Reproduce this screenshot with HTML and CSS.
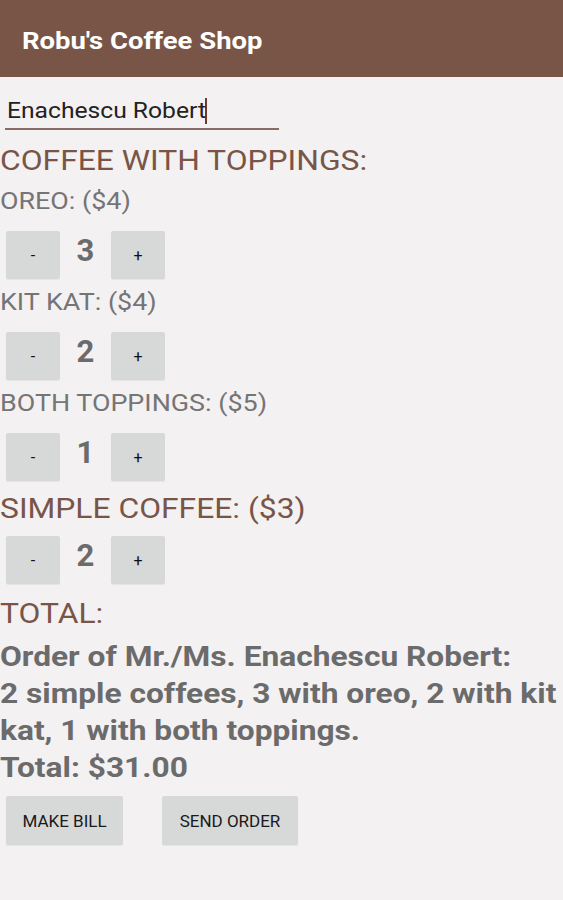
FILE: index.html
```html
<!DOCTYPE html>
<html>
<head>
<meta charset="utf-8">
<link rel="stylesheet" href="styles.css">
</head>
<body>
<header class="bar"><span class="bar-title sx">Robu's Coffee Shop</span></header>
<main class="content">
  <div class="name-field"><span class="name-text sx">Enachescu Robert</span><span class="caret"></span></div>
  <div class="heading"><span class="sx">COFFEE WITH TOPPINGS:</span></div>
  <div class="label"><span class="sx">OREO: ($4)</span></div>
  <div class="stepper"><span class="btn sq">-</span><span class="qty">3</span><span class="btn sq">+</span></div>
  <div class="label"><span class="sx">KIT KAT: ($4)</span></div>
  <div class="stepper"><span class="btn sq">-</span><span class="qty">2</span><span class="btn sq">+</span></div>
  <div class="label"><span class="sx">BOTH TOPPINGS: ($5)</span></div>
  <div class="stepper"><span class="btn sq">-</span><span class="qty">1</span><span class="btn sq">+</span></div>
  <div class="heading big"><span class="sx">SIMPLE COFFEE: ($3)</span></div>
  <div class="stepper after-big"><span class="btn sq">-</span><span class="qty">2</span><span class="btn sq">+</span></div>
  <div class="heading total"><span class="sx">TOTAL:</span></div>
  <div class="summary">Order of Mr./Ms. Enachescu Robert:<br>2 simple coffees, 3 with oreo, 2 with kit kat, 1 with both toppings.<br>Total: $31.00</div>
  <div class="actions"><span class="btn wide bill">MAKE BILL</span><span class="btn wide send">SEND ORDER</span></div>
</main>
</body>
</html>
```
FILE: styles.css
```css
html, body { margin: 0; padding: 0; }
body {
  background: #f3f1f2;
  font-family: Roboto, "Noto Sans", sans-serif;
  width: 563px;
  height: 900px;
  overflow: hidden;
}
.sx {
  display: inline-block;
  transform: scaleX(1.12);
  transform-origin: left center;
  white-space: nowrap;
}
.bar {
  height: 77px;
  background: #795548;
  display: flex;
  align-items: center;
  padding-left: 22px;
}
.bar-title {
  color: #fff;
  font-weight: 700;
  font-size: 24.5px;
  margin-top: 3px;
}
.content { display: flex; flex-direction: column; }
.name-field {
  margin: 16px 0 0 5px;
  width: 274px;
  height: 37px;
  border-bottom: 2px solid #8a6c66;
  display: flex;
  align-items: center;
  padding-left: 2px;
  box-sizing: border-box;
}
.name-text { font-size: 22px; color: #222; }
.caret { width: 2px; height: 26px; background: #6b3a2e; margin-left: 20px; }
.heading {
  color: #795548;
  font-size: 28.4px;
  line-height: 36px;
  margin: 13px 0 7px;
}
.heading.big { margin: 2px 0 0; }
.heading.total { margin: 4px 0 0; }
.label {
  color: #757575;
  font-size: 24px;
  line-height: 30px;
}
.stepper {
  display: flex;
  align-items: center;
  margin: 15px 0 8px 6px;
}
.stepper.after-big { margin-top: 9px; }
.btn {
  background: #d7d8d8;
  border-radius: 2px;
  color: #111;
  display: flex;
  align-items: center;
  justify-content: center;
  box-shadow: 0 1px 1px rgba(0,0,0,0.06);
}
.sq { width: 54px; height: 48px; font-size: 16px; }
.qty {
  width: 51px;
  text-align: center;
  font-size: 31px;
  font-weight: 700;
  color: #6b6b6b;
  margin-top: -9px;
}
.summary {
  color: #6b6b6b;
  font-weight: 700;
  font-size: 28.3px;
  line-height: 37px;
  margin-top: 6px;
  width: 502px;
  transform: scaleX(1.12);
  transform-origin: left top;
}
.actions { display: flex; gap: 39px; margin: 10px 0 0 6px; }
.wide { height: 49px; font-size: 17px; font-weight: 400; color: #1a1a1a; }
.bill { width: 117px; }
.send { width: 136px; }
```
